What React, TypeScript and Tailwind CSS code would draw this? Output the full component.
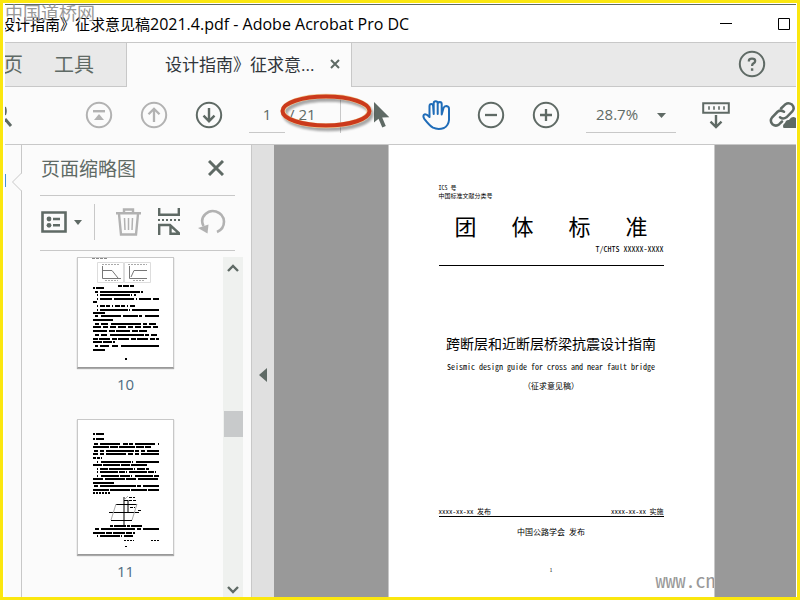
import { useState } from 'react';
import type { ReactNode } from 'react';

const IconButton = ({ label, className, children }: { label: string; className?: string; children: ReactNode }) => (
  <button type="button" aria-label={label} className={`flex shrink-0 items-center justify-center ${className ?? ''}`}>
    {children}
  </button>
);

const CircleIcon = ({ children, color = '#5f6a65' }: { children: ReactNode; color?: string }) => (
  <svg width="28" height="28" viewBox="0 0 28 28" fill="none" stroke={color} strokeWidth="2">
    <circle cx="14" cy="14" r="12.2" />
    {children}
  </svg>
);

const TitleBar = () => (
  <header className="flex h-[37px] shrink-0 items-center overflow-hidden bg-white">
    <h1 className="-ml-[5px] flex-1 text-[15px] whitespace-nowrap text-black">
      设计指南》征求意见稿<span className="text-base">2021.4.pdf - Adobe Acrobat Pro DC</span>
    </h1>
    <IconButton label="最小化" className="h-full w-[58px]">
      <svg width="12" height="12" stroke="#000"><path d="M0 5.5H12" /></svg>
    </IconButton>
    <IconButton label="最大化" className="h-full w-[41px] pl-4">
      <svg width="12" height="12" fill="none" stroke="#000"><path d="M.5 .5H11.5V11.5H.5Z" /></svg>
    </IconButton>
  </header>
);

const TabBar = () => (
  <nav className="flex h-[45px] shrink-0 border-y border-[#c8c8c8] bg-[#e9e9e9] text-[#5f6a65]">
    <div className="flex w-[122px] shrink-0 items-center overflow-hidden border-r border-[#c8c8c8] text-xl whitespace-nowrap">
      <button type="button" className="-ml-[22px]">主页</button>
      <button type="button" className="ml-[31px]">工具</button>
    </div>
    <div className="-mb-px flex w-[225px] shrink-0 items-center border-r border-[#c8c8c8] bg-[#fbfbfb] pl-[38px]">
      <button type="button" className="text-[17px] whitespace-nowrap text-[#30353a]">设计指南》征求意...</button>
      <IconButton label="关闭标签" className="ml-auto h-full w-8 pb-0.5">
        <svg width="10" height="10" stroke="#5f6a65" strokeWidth="2"><path d="M1 1L9 9M9 1L1 9" /></svg>
      </IconButton>
    </div>
    <div className="flex flex-1 items-center justify-end pr-[30px] pb-0.5">
      <IconButton label="帮助">
        <CircleIcon>
          <path d="M10.9 11.5V10.6Q11 8.7 14 8.7Q17.2 8.7 17.2 11Q17.2 12.6 15.2 13.6Q14.1 14.2 14.1 16" strokeWidth="2.3" />
          <path d="M14.1 18.3V20.8" strokeWidth="2.4" />
        </CircleIcon>
      </IconButton>
    </div>
  </nav>
);

const Toolbar = () => {
  const [page, setPage] = useState('1');

  return (
    <div className="flex h-[58px] shrink-0 items-center overflow-hidden border-b border-[#c8c8c8] bg-[#fbfbfb] pb-0.5 text-[#5f6a65]">
      <IconButton label="查找" className="h-8 w-[66px] justify-start">
        <svg width="10" height="26" fill="none" stroke="#5f6a65"><path d="M0 5Q1.6 9 0 13" strokeWidth="2" /><path d="M0 17L6 24" strokeWidth="3" /></svg>
      </IconButton>
      <IconButton label="第一页" className="w-[55px]">
        <CircleIcon color="#b2b2b2">
          <path d="M8 10.2H20" strokeWidth="2.4" />
          <path d="M14 13L19 19H9Z" fill="#b2b2b2" stroke="none" />
        </CircleIcon>
      </IconButton>
      <IconButton label="上一页" className="w-[55px]">
        <CircleIcon color="#b2b2b2"><path d="M14 21V8M8.5 13.3L14 7.8L19.5 13.3" strokeWidth="2.3" /></CircleIcon>
      </IconButton>
      <IconButton label="下一页" className="w-[55px]">
        <CircleIcon><path d="M14 7V20M8.5 14.7L14 20.2L19.5 14.7" strokeWidth="2.4" /></CircleIcon>
      </IconButton>
      <div className="relative ml-[13px] flex h-9 w-[92px] shrink-0 items-center border-r border-[#c8c8c8] text-[15px]">
        <input
          aria-label="页码"
          value={page}
          onChange={(e) => setPage(e.target.value)}
          className="h-full w-9 border-b border-[#c8c8c8] bg-transparent text-center outline-none"
        />
        <span className="ml-1 whitespace-pre">/ 21</span>
        {/* hand drawn marker around the page total */}
        <svg className="absolute -top-1 left-7 drop-shadow-[2px_3px_1px_#00000055]" width="100" height="40" viewBox="0 0 100 40" fill="none">
          <ellipse cx="49" cy="18" rx="43" ry="14.8" stroke="#f0d09a" strokeWidth="5" />
          <ellipse cx="49" cy="18" rx="43.5" ry="14.5" stroke="#cb3a1c" strokeWidth="4" />
        </svg>
      </div>
      <IconButton label="选择工具" className="ml-[13px] w-[55px]">
        <svg width="18" height="28" viewBox="0 0 18 28"><path d="M1 1V21.5L5.5 17.8L9.3 26.6L12.8 25L9.2 16.5L16.3 16.2Z" fill="#5f6a65" /></svg>
      </IconButton>
      <IconButton label="手形工具" className="w-[55px]">
        <svg width="30" height="32" viewBox="0 0 30 32" fill="none" stroke="#1f6cb8" strokeWidth="2" strokeLinejoin="round" strokeLinecap="round">
          <path d="M7.5 18V7Q7.6 5 9.3 5Q10.9 5 11.1 7L11.7 15V4.2Q11.8 2.3 13.7 2.3Q15.6 2.3 15.7 4.2V15V5Q15.9 3 17.8 3Q19.7 3.1 19.7 5V15.5L21.5 9Q22.2 7 24.4 7Q27 7.4 27 9.8V21Q26.5 26.5 22 29Q16 31 11 28.7Q7.5 26.5 2.3 19.8Q.7 17 2 15.8Q3.7 14.3 7.5 18Z" />
        </svg>
      </IconButton>
      <IconButton label="缩小" className="w-[54px]">
        <CircleIcon><path d="M8 14H20" strokeWidth="2.3" /></CircleIcon>
      </IconButton>
      <IconButton label="放大" className="w-[55px]">
        <CircleIcon><path d="M8 14H20M14 8V20" strokeWidth="2.3" /></CircleIcon>
      </IconButton>
      <div className="relative ml-[13px] shrink-0">
        <select aria-label="缩放比例" className="h-9 w-[90px] appearance-none border-b border-[#c8c8c8] bg-transparent pl-[10px] text-[15px] outline-none">
          <option>28.7%</option>
        </select>
        <svg className="pointer-events-none absolute top-4 right-[10px]" width="9" height="5"><path d="M0 0H9L4.5 5Z" fill="#5f6a65" /></svg>
      </div>
      <IconButton label="滚动模式" className="ml-3 w-[55px]">
        <svg width="28" height="28" viewBox="0 0 28 28" fill="none" stroke="#5f6a65" strokeWidth="2">
          <path d="M1.2 2.2H26.8V11.8H1.2Z" />
          <path d="M6 7H8M11 7H13M16 7H18M21 7H23M7 5V9M12 5V9M17 5V9M22 5V9" strokeWidth="1.2" />
          <path d="M14 14V26M8.5 20.7L14 26L19.5 20.7" strokeWidth="2.4" />
        </svg>
      </IconButton>
      <IconButton label="共享链接" className="ml-auto">
        <svg width="27" height="28" viewBox="0 0 27 28" fill="none" stroke="#5f6a65" strokeWidth="2.5" strokeLinecap="round">
          <path d="M12 7.5L16.5 3.2Q19.5 1 23 3.6Q26.2 7 23.3 10.5L17.5 16.3Q14 18.6 11 16.2" />
          <path d="M15 10.8Q11.5 8.5 8.5 10.8L3.2 16.3Q.4 20 3.4 23.2Q7 26 10.3 23.2L13 20.5" />
          <path d="M14.5 27Q13 24 16 22Q17 18.5 20 19Q23 14 27 17V27Z" fill="#5f6a65" stroke="none" />
        </svg>
      </IconButton>
    </div>
  );
};

type Line = [x: number, y: number, width: number, dash?: string];

const PAGE_10: Line[] = [
  [40, 28, 16, '4 1 6 1'], [15, 30, 11, '2 1 9'], [17, 34, 48, '3 2 40 1'], [19, 37, 39, '1 2 30 1'],
  [19, 41, 62, '1 2 12 2 20 2'], [15, 44, 4], [19, 48, 39, '1 2 5 1 4 2'], [19, 52, 62, '1 2 28 1'],
  [15, 55, 12], [17, 58, 64, '3 3 20 2 15 1'], [15, 62, 20], [17, 66, 64, '4 2 7 3 30 2'],
  [15, 69, 66, '8 2 5 2 6 2'], [15, 73, 54, '14 2 6 1'], [17, 77, 64, '4 2 6 3 34 1'], [15, 81, 66, '5 1 11 2'],
  [15, 84, 22, '9 1'], [17, 88, 64, '3 2 9 3 6 3 40 1'], [15, 92, 12],
];

const PAGE_11: Line[] = [
  [15, 14, 11, '2 1 9'], [15, 19, 11, '2 1 9'], [16, 24, 65, '4 2 20 3 5 1'], [15, 27, 58, '16 1 8 1'],
  [16, 31, 65, '4 2 4 2 28 1'], [15, 34, 66, '5 2 4 2 20 2'], [15, 38, 9, '3 1'], [19, 42, 62, '1 3 30 1'],
  [15, 45, 54, '9 1 17 1'], [19, 49, 52, '1 2 8 1 24 1'], [19, 52, 60, '1 2 18 1 6 1'], [19, 56, 62, '1 3 18 1 10 1'],
  [15, 59, 66, '10 2 20 1'], [15, 63, 21], [16, 66, 65, '4 2 36 1'], [15, 70, 66, '16 1 20 1'],
  [15, 73, 17, '2 1'], [32, 106, 32, '3 1 12 1'], [17, 109, 64, '4 2 34 2'], [15, 113, 42, '12 1 6 1'],
  [19, 116, 36, '1 2 20 1'],
];

const PrintLines = ({ lines }: { lines: Line[] }) => (
  <g stroke="#000" strokeWidth="2">
    {lines.map(([x, y, width, dash]) => (
      <path key={y} d={`M${x} ${y}h${width}`} strokeDasharray={dash} />
    ))}
  </g>
);

const Thumbnail = ({ number, children }: { number: number; children: ReactNode }) => (
  <li>
    <button type="button" aria-label={`第 ${number} 页`} className="flex flex-col items-center">
      <span className="w-[97px] border border-[#c8c8c8] border-b-[#999] bg-white shadow-[0_1px_1px_#aaa]">{children}</span>
      <span className="mt-[3px] h-[26px] text-[15px] leading-[26px] text-[#4e6b80]">{number}</span>
    </button>
  </li>
);

const ThumbnailPanel = () => (
  <aside className="flex w-[230px] shrink-0 flex-col border-r border-[#c8c8c8] bg-[#fbfbfb] pl-[18px]">
    <div className="mr-4 flex h-[51px] shrink-0 items-center justify-between border-b border-[#c8c8c8]">
      <h2 className="pb-0.5 pl-px text-[19px] text-[#5f6a65]">页面缩略图</h2>
      <IconButton label="关闭面板" className="h-8 w-[38px] pb-1">
        <svg width="16" height="16" stroke="#5f6a65" strokeWidth="3"><path d="M1 1L15 15M15 1L1 15" /></svg>
      </IconButton>
    </div>
    <div className="mr-4 flex h-[55px] shrink-0 items-center border-b border-[#c8c8c8] pb-0.5">
      <IconButton label="选项" className="h-9 w-[55px] gap-[7px] border-r border-[#c8c8c8] pr-[11px]">
        <svg width="26" height="22" fill="none" stroke="#5f6a65" strokeWidth="2">
          <path d="M1.5 1.5H24.5V20.5H1.5Z" strokeWidth="2.6" />
          <circle cx="8" cy="8" r="2.4" fill="#5f6a65" stroke="none" /><circle cx="8" cy="14.3" r="2.4" fill="#5f6a65" stroke="none" />
          <path d="M12 8H19M12 14.3H19" strokeWidth="2.4" />
        </svg>
        <svg width="8" height="5"><path d="M0 0H8L4 5Z" fill="#5f6a65" /></svg>
      </IconButton>
      <IconButton label="删除页面" className="ml-5">
        <svg width="27" height="28" fill="none" stroke="#b2b2b2" strokeWidth="2">
          <path d="M1 5.2H26M9 5V1.5H18V5M4 6L6 26.5H21L23 6" strokeWidth="2.4" />
          <path d="M9.5 10L10 22M13.5 10V22M17.5 10L17 22" strokeWidth="1.5" />
        </svg>
      </IconButton>
      <IconButton label="拆分页面" className="ml-4">
        <svg width="22" height="28" fill="none" stroke="#5f6a65" strokeWidth="2.4">
          <path d="M1.2 0V6.8H20.8V0M1.2 27V17H12L20.8 25V27M12.5 17V25.8H20" />
          <path d="M0 12H22" strokeDasharray="2 2" strokeWidth="2" />
        </svg>
      </IconButton>
      <IconButton label="旋转页面" className="ml-[18px]">
        <svg width="28" height="26" fill="none" stroke="#b2b2b2" strokeWidth="2.6">
          <path d="M5.5 17Q2 10 7.5 5Q12 .7 18 2.5Q25.5 5 26 12.5Q26 20 19 23" />
          <path d="M0 19L10.5 15.5L9.5 24.5Z" fill="#b2b2b2" stroke="none" />
        </svg>
      </IconButton>
    </div>
    <div className="mr-2 flex min-h-0 flex-1 pt-[6px]">
      <ol className="flex flex-1 flex-col items-center gap-[22px] overflow-hidden pr-3">
        <Thumbnail number={10}>
          <svg width="95" height="109" className="block">
            <g fill="none" stroke="#aaa" strokeWidth="1">
              <path d="M14 .5h16" strokeDasharray="3 1" stroke="#888" />
              <path d="M19.5 4.5H45.5V24.5H19.5ZM46.5 4.5H72.5V24.5H46.5Z" stroke="#ddd" />
              <path d="M24.5 8V20.5H43M24 12.5H34L40 20M51.5 8V20.5H69M53 19L56 12.5H69" stroke="#777" />
              <path d="M24 6.5H41M50 6.5H69M27 22.5H40M55 22.5H67" strokeDasharray="2 1" />
            </g>
            <PrintLines lines={PAGE_10} />
            <path d="M47 101h2" stroke="#000" strokeWidth="2" />
          </svg>
        </Thumbnail>
        <Thumbnail number={11}>
          <svg width="95" height="134" className="block">
            <PrintLines lines={PAGE_11} />
            <g fill="none" stroke="#000">
              <path d="M46 77V105M50 80V92M38 84.5H59M31 92.5H61M33 100.5H54M46 80.5H50" />
              <path d="M38 84L33 100M59 84L54 100M46 80L50 76" stroke="#aaa" />
              <path d="M51 77.5h6M51 80.5h8M52 87.5h5M60 90.5h4" strokeDasharray="3 1" />
              <path d="M46 120.5h10M73 120.5h8M47 126.5h2" strokeDasharray="2 1" />
            </g>
          </svg>
        </Thumbnail>
      </ol>
      <div className="flex w-5 shrink-0 flex-col items-center bg-[#eff1ef]">
        <button type="button" aria-label="向上滚动" className="flex h-[22px] items-center">
          <svg width="12" height="8" fill="none" stroke="#5f6a65" strokeWidth="2.4"><path d="M1 7L6 2L11 7" /></svg>
        </button>
        <div className="flex flex-1 flex-col items-center">
          <div className="flex-[132]" />
          <div className="h-[26px] w-[19px] bg-[#c8cacb]" />
          <div className="flex-[146]" />
        </div>
        <button type="button" aria-label="向下滚动" className="flex h-[14px] items-center">
          <svg width="12" height="8" fill="none" stroke="#5f6a65" strokeWidth="2.4"><path d="M1 1L6 6L11 1" /></svg>
        </button>
      </div>
    </div>
  </aside>
);

const DocumentView = () => (
  <main className="flex flex-1 justify-center overflow-hidden bg-[#999] pl-8">
    <article className="relative flex w-[327px] shrink-0 flex-col overflow-hidden border-x border-[#c8c8c8] bg-white px-[50px] pt-[39px] font-['Noto_Sans_Mono_CJK_SC','Noto_Sans_CJK_SC',monospace] text-black">
      <p className="text-[6px] leading-[8px] font-medium">ICS 号</p>
      <p className="text-[6px] leading-[8px] font-medium">中国标准文献分类号</p>
      <p className="mt-[9px] flex justify-between px-4 text-[22px] leading-[32px]">
        <span>团</span><span>体</span><span>标</span><span>准</span>
      </p>
      <p className="mt-[3px] border-b border-black pb-[11px] text-right text-[8px] leading-[10px] whitespace-nowrap">
        T/CHTS XXXXX-XXXX
      </p>
      <h2 className="mt-[67px] text-center text-sm whitespace-nowrap">跨断层和近断层桥梁抗震设计指南</h2>
      <p className="mt-[9px] text-center text-[8px] leading-[10px] whitespace-nowrap">
        Seismic design guide for cross and near fault bridge
      </p>
      <p className="mt-[9px] text-center text-[8px] leading-[10px]">（征求意见稿）</p>
      <div className="mt-[116px] flex justify-between border-b border-black text-[7px] leading-[9px]">
        <span>xxxx-xx-xx 发布</span>
        <span>xxxx-xx-xx 实施</span>
      </div>
      <p className="mt-[10px] text-center text-[8px] leading-[10px]">中国公路学会 发布</p>
      <p className="mt-[29px] text-center text-[5px] leading-[8px]">1</p>
      <span className="absolute bottom-[3px] left-[267px] text-xl font-light text-[#999]">www.cn</span>
    </article>
  </main>
);

const App = () => {
  return (
    <div className="relative flex h-screen flex-col overflow-hidden border-3 border-[#fbe70f] bg-white pt-px pr-px pl-[2px] font-['Open_Sans','Noto_Sans_CJK_SC',sans-serif]">
      <div className="h-px shrink-0 bg-[#5f6a65]" />
      <TitleBar />
      <TabBar />
      <Toolbar />
      <div className="flex min-h-0 flex-1">
        <div className="relative w-[17px] shrink-0 border-r border-[#c8c8c8] bg-[#fbfbfb]">
          <svg className="absolute top-[27px] left-0" width="17" height="20" fill="none">
            <path d="M17 1L8 10L17 19Z" fill="#fbfbfb" />
            <path d="M16.5 1L7.5 10L16.5 19" stroke="#c8c8c8" />
            <path d="M.5 2V15" stroke="#4a90d0" />
          </svg>
        </div>
        <ThumbnailPanel />
        <button type="button" aria-label="折叠导航窗格" className="flex w-[22px] shrink-0 items-center justify-center bg-[#e0e0e0] pt-2">
          <svg width="8" height="14"><path d="M8 0V14L0 7Z" fill="#5f6a65" /></svg>
        </button>
        <DocumentView />
      </div>
      <span className="absolute top-0 left-0.5 font-['Noto_Sans_CJK_SC',sans-serif] text-lg leading-[18px] text-[#999]">
        中国道桥网
      </span>
    </div>
  );
};

export default App;
